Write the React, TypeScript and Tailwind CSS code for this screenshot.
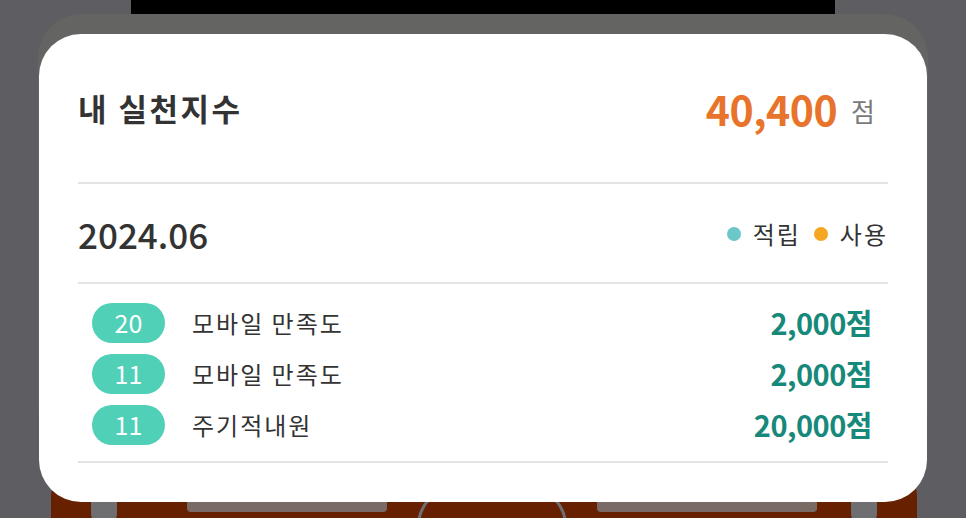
const font = { fontFamily: '"Noto Sans CJK KR", "Noto Sans", sans-serif' };

const rows = [
  { day: "20", label: "모바일 만족도", amount: "2,000" },
  { day: "11", label: "모바일 만족도", amount: "2,000" },
  { day: "11", label: "주기적내원", amount: "20,000" },
];

export default function App() {
  return (
    <div className="relative h-[518px] w-[966px] overflow-hidden bg-[#5e5d62]" style={font}>
      {/* dimmed page behind the sheet */}
      <div className="absolute left-[131px] top-0 h-[34px] w-[704px] bg-black" />
      <div className="absolute left-[38px] top-[14px] h-[440px] w-[890px] rounded-[44px] bg-[#646463]" />
      <div className="absolute left-[51px] top-[466px] flex h-[70px] w-[866px] items-start rounded-t-[30px] bg-[#672000] px-[40px] pt-[20px]">
        <div className="h-[40px] w-[26px] rounded-full bg-[#6f6f72]" />
        <div className="ml-[70px] mt-[12px] h-[14px] w-[200px] rounded bg-[#7a6a66]" />
        <div className="ml-[30px] h-[80px] w-[150px] rounded-full border-[3px] border-[#6f6f72]" />
        <div className="ml-[30px] mt-[12px] h-[14px] w-[220px] rounded bg-[#7a6a66]" />
        <div className="ml-auto h-[40px] w-[26px] rounded-full bg-[#6f6f72]" />
      </div>

      {/* sheet */}
      <div className="absolute left-[39px] top-[34px] h-[468px] w-[888px] rounded-[42px] bg-white px-[39px]">
        <div className="flex h-[148px] items-center justify-between">
          <h1 className="text-[31px] font-bold tracking-[2.5px] text-[#333333]">내 실천지수</h1>
          <div className="flex items-center pr-[13px]">
            <span className="text-[41px] font-bold leading-none tracking-[-0.5px] text-[#e8732b]">40,400</span>
            <span className="ml-[14px] mt-[4px] text-[26px] text-[#7a7a7a]">점</span>
          </div>
        </div>
        <div className="h-[2px] bg-[#e4e4e4]" />

        <div className="flex h-[98px] items-center justify-between pt-[2px]">
          <span className="text-[35px] font-medium text-[#333333]">2024.06</span>
          <div className="flex items-center text-[24px] tracking-[2px] text-[#333333]">
            <span className="h-[14px] w-[14px] rounded-full bg-[#6cc7c9]" />
            <span className="ml-[12px]">적립</span>
            <span className="ml-[13px] h-[14px] w-[14px] rounded-full bg-[#f6a721]" />
            <span className="ml-[12px]">사용</span>
          </div>
        </div>
        <div className="h-[2px] bg-[#e4e4e4]" />

        <div className="pb-[11px] pl-[14px] pr-[16px] pt-[13px]">
          {rows.map((r, i) => (
            <div key={i} className="flex h-[51px] items-center">
              <span className="flex h-[40px] w-[73px] items-center justify-center rounded-full bg-[#50d0b7] text-[25px] font-normal text-white">
                {r.day}
              </span>
              <span className="ml-[27px] text-[24px] tracking-[2px] text-[#333333]">{r.label}</span>
              <span className="ml-auto text-[29px] font-semibold tracking-[-0.5px] text-[#17897a]">
                {r.amount}점
              </span>
            </div>
          ))}
        </div>
        <div className="h-[2px] bg-[#e4e4e4]" />
      </div>
    </div>
  );
}
